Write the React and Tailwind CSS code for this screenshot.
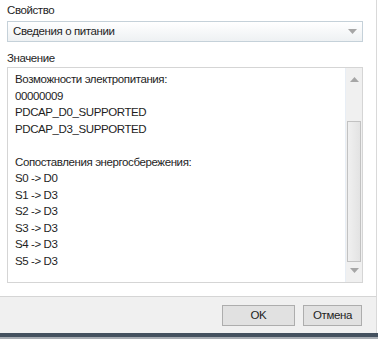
import React from 'react';

const lines = [
  'Возможности электропитания:',
  '00000009',
  'PDCAP_D0_SUPPORTED',
  'PDCAP_D3_SUPPORTED',
  '',
  'Сопоставления энергосбережения:',
  'S0 -> D0',
  'S1 -> D3',
  'S2 -> D3',
  'S3 -> D3',
  'S4 -> D3',
  'S5 -> D3',
];

const Arrow = ({ up }) => (
  <svg width="9" height="5" viewBox="0 0 9 5" className="block">
    <path d={up ? 'M4.5 0 L9 5 L0 5 Z' : 'M0 0 L9 0 L4.5 5 Z'} fill="#a6a6a6" />
  </svg>
);

export default function App() {
  return (
    <div
      className="w-[378px] h-[339px] flex flex-col bg-white text-[11.5px] tracking-[-0.4px] text-[#1e1e1e] overflow-hidden"
      style={{ fontFamily: '"Liberation Sans", Arial, sans-serif' }}
    >
      <div className="h-[297px] flex flex-col pl-[7px] pr-[13px] border-r border-[#d9d9d9] mr-[1px] border-b border-b-[#d5d5d5]">
        <div className="pt-[3px] h-[21px] leading-[14px]">Свойство</div>
        <div className="h-[21px] flex items-center justify-between border border-[#c5d1d9] bg-gradient-to-b from-[#ffffff] to-[#eef1f3] pl-[5px] pr-[5px]">
          <span>Сведения о питании</span>
          <Arrow />
        </div>
        <div className="pt-[9px] h-[25px] leading-[14px]">Значение</div>
        <div className="h-[216px] flex border border-[#d5d5d5]">
          <div className="flex-1 pl-[7px] pt-[3px] leading-[16.5px]">
            {lines.map((l, i) => (
              <div key={i} className="h-[16.5px] whitespace-nowrap">{l || '\u00a0'}</div>
            ))}
          </div>
          <div className="w-[17px] flex flex-col bg-[#f0f0f0] border-l border-[#e8eef5]">
            <div className="h-[53px] flex justify-center pt-[9px]"><Arrow up /></div>
            <div className="h-[141px] mx-[1px] border border-[#c2c2c2] bg-gradient-to-r from-[#f0f0f0] to-[#e3e3e3]" />
            <div className="flex-1 flex justify-center pt-[6px]"><Arrow /></div>
          </div>
        </div>
      </div>
      <div className="flex-1 bg-[#f0f0f0] flex justify-end items-start gap-[8px] pt-[8px] pr-[14px] border-r border-[#d9d9d9] mr-[1px]">
        <button className="w-[73px] h-[21px] border border-[#adadad] bg-[#e1e1e1] flex items-center justify-center">OK</button>
        <button className="w-[59px] h-[21px] border border-[#adadad] bg-[#e1e1e1] flex items-center justify-center">Отмена</button>
      </div>
      <div className="h-[4px] bg-[#44515f]" />
      <div className="h-[2px] bg-[#a8adb3]" />
    </div>
  );
}
